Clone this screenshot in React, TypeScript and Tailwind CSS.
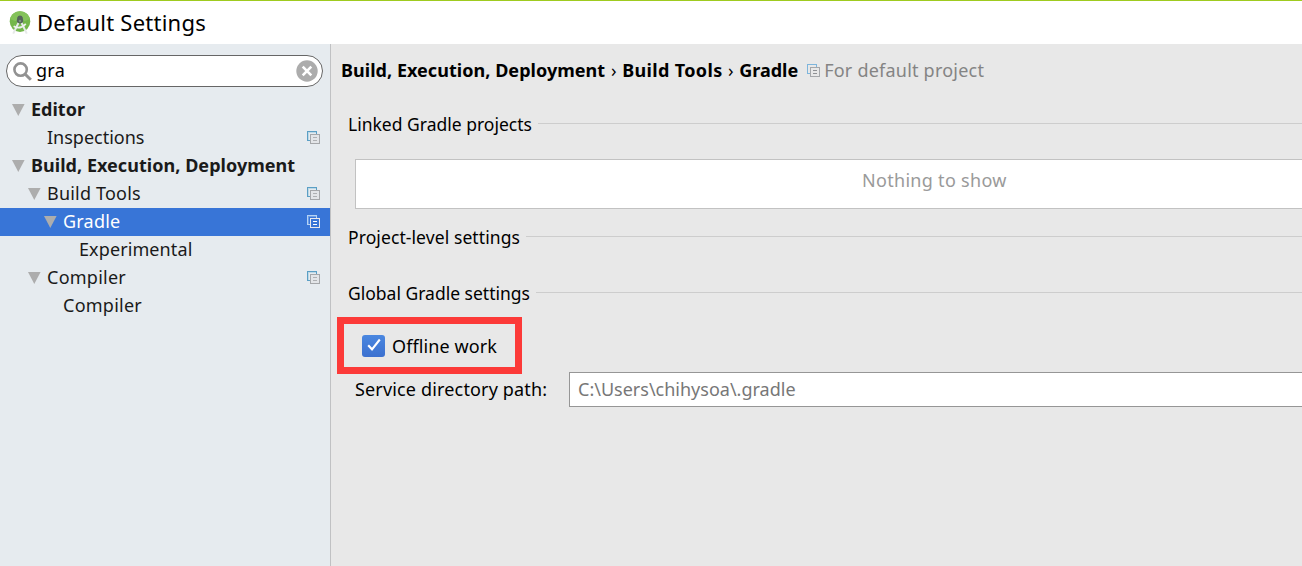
import type { ReactNode } from "react";

function CopyIcon({ selected = false, plain = false }: { selected?: boolean; plain?: boolean }) {
  const back = selected ? "#b4d2f4" : plain ? "#7db5dc" : "#5b9fc5";
  const front = selected ? "#e8e8ec" : "#a5a7aa";
  const fill = selected ? "#3875d7" : plain ? "#e8e8e8" : "#e3e5e8";
  return (
    <svg width="13" height="13" viewBox="0 0 13 13" shapeRendering="crispEdges" className="shrink-0">
      <path d="M0 0H10V3H9V1H1V9H3V10H0Z" fill={back} />
      {!plain && <path d="M1 1H9V2H2V9H1Z" fill={selected ? "#6b9de6" : "#bcd8e6"} />}
      <rect x="3.5" y="3.5" width="9" height="9" fill={fill} stroke={front} />
      <path d="M6 6H10V7H6ZM6 9H10V10H6Z" fill={selected ? "#ffffff" : plain ? "#8f9194" : "#aeb0b3"} />
    </svg>
  );
}

function LogoIcon() {
  return (
    <svg width="22" height="24" viewBox="0 0 22 24" className="shrink-0">
      <circle cx="11" cy="10.6" r="10.3" fill="#74b74a" />
      <path d="M1 8A10.3 10.3 0 0 1 21 8Q11 13 1 8Z" fill="#84c25a" />
      <path d="M8.3 6.5Q8.8 4.6 11 4.6Q13.2 4.6 13.7 6.5L14.3 10L13 12.5H9L7.7 10Z" fill="#55655a" />
      <path d="M9.4 12L4.2 22.6M12.6 12L17.8 22.6" stroke="#e6e9e8" strokeWidth="2" fill="none" />
      <path d="M4.6 15.2Q11 19 16.8 12.8" stroke="#eef1ee" strokeWidth="1.7" fill="none" />
      <circle cx="11" cy="10" r="1.3" fill="#7c8c80" />
    </svg>
  );
}

type Row = { label: ReactNode; pad: string; arrow?: boolean; icon?: boolean; cls?: string; selected?: boolean };

const rows: Row[] = [
  { label: "Editor", pad: "pl-[12px]", arrow: true, cls: "font-bold" },
  { label: "Inspections", pad: "pl-[47px]", icon: true },
  { label: "Build, Execution, Deployment", pad: "pl-[12px]", arrow: true, cls: "font-bold tracking-[0.04px]" },
  { label: "Build Tools", pad: "pl-[28px]", arrow: true, icon: true, cls: "tracking-[0.2px]" },
  { label: "Gradle", pad: "pl-[44px]", arrow: true, icon: true, selected: true, cls: "tracking-[0.2px]" },
  { label: "Experimental", pad: "pl-[79px]", cls: "tracking-[0.1px]" },
  { label: "Compiler", pad: "pl-[28px]", arrow: true, icon: true, cls: "tracking-[0.25px]" },
  { label: "Compiler", pad: "pl-[63px]", cls: "tracking-[0.25px]" },
];

function TreeRow({ label, pad, arrow, icon, cls = "", selected }: Row) {
  return (
    <div className={`flex h-7 items-center pb-[2px] pr-[10px] ${pad} ${selected ? "bg-[#3875d7] text-white" : "text-[#1a1a1a]"}`}>
      {arrow && (
        <svg width="13" height="12" viewBox="0 0 13 12" className="mr-[6px] mt-[2px] shrink-0">
          <path d="M0 0H12.6L6.3 12Z" fill="#adadad" />
        </svg>
      )}
      <span className={`whitespace-nowrap leading-[26px] ${cls}`}>{label}</span>
      {icon && (
        <span className="ml-auto">
          <CopyIcon selected={selected} />
        </span>
      )}
    </div>
  );
}

function SectionTitle({ children, cls }: { children: string; cls: string }) {
  return (
    <div className="flex h-6 items-center pl-[17px]">
      <span className={`whitespace-nowrap pb-[2px] text-[17.5px] leading-[22px] ${cls}`}>{children}</span>
      <div className="mb-[3px] ml-[6px] h-px flex-1 bg-[#cdcdcd]" />
    </div>
  );
}

export default function App() {
  return (
    <div className="flex h-[566px] w-[1302px] flex-col overflow-hidden bg-[#e8e8e8] font-['Noto_Sans','Open_Sans',sans-serif] text-[18px] text-black">
      <header className="flex h-11 shrink-0 items-center border-t border-[#9fcb1f] bg-white pl-[9px]">
        <LogoIcon />
        <h1 className="ml-[6px] pb-[2px] text-[22px] leading-[30px] tracking-[0.25px]">Default Settings</h1>
      </header>
      <div className="flex min-h-0 flex-1">
        <aside className="w-[331px] shrink-0 border-r border-[#c0c1c3] bg-[#e6ebef] pt-[11px]">
          <div className="ml-[6px] flex h-8 w-[317px] items-center rounded-full border border-[#666] bg-white pl-[6px] pr-[4px]">
            <svg width="19" height="19" viewBox="0 0 19 19" fill="none" stroke="#929292" className="shrink-0">
              <circle cx="7.6" cy="7.6" r="6.2" strokeWidth="2.6" />
              <path d="M12 12L17.8 17.8" strokeWidth="3" />
            </svg>
            <span className="ml-[4px] pb-[2px] leading-7 tracking-[0.3px]">gra</span>
            <svg width="22" height="22" viewBox="0 0 22 22" className="ml-auto shrink-0">
              <circle cx="11" cy="11" r="10.7" fill="#acacac" />
              <path d="M6.7 6.7L15.3 15.3M15.3 6.7L6.7 15.3" stroke="#fff" strokeWidth="2.6" />
            </svg>
          </div>
          <div className="mt-[9px]">
            {rows.map((row, i) => (
              <TreeRow key={i} {...row} />
            ))}
          </div>
        </aside>
        <main className="min-w-0 flex-1 pt-[11px]">
          <div className="flex h-[30px] items-center whitespace-nowrap pl-[10px]">
            <span className="font-bold tracking-[0.04px]">Build, Execution, Deployment</span>
            <span className="w-[17px] text-center">›</span>
            <span className="w-[100px] font-bold tracking-[0.35px]">Build Tools</span>
            <span className="w-[17px] text-center">›</span>
            <span className="font-bold">Gradle</span>
            <span className="ml-[9px]">
              <CopyIcon plain />
            </span>
            <span className="ml-[4px] tracking-[0.22px] text-[#848484]">For default project</span>
          </div>
          <div className="mt-[28px]">
            <SectionTitle cls="tracking-[0px]">Linked Gradle projects</SectionTitle>
          </div>
          <div className="ml-[24px] mt-[22px] flex h-[50px] items-center border border-r-0 border-[#c2c2c2] bg-white pb-[8px] pl-[506px] tracking-[0.3px] text-[#9a9a9a]">
            Nothing to show
          </div>
          <div className="mt-[17px]">
            <SectionTitle cls="tracking-[0.09px]">Project-level settings</SectionTitle>
          </div>
          <div className="mt-8">
            <SectionTitle cls="tracking-[0px]">Global Gradle settings</SectionTitle>
          </div>
          <div className="ml-[6px] mt-[11px] flex h-[57px] w-[185px] items-center border-[7px] border-[#fc3a38] pl-[18px]">
            <span className="flex h-[22px] w-[23px] shrink-0 items-center justify-center rounded-[3px] bg-linear-to-b from-[#4a87e0] to-[#3c70cf]">
              <svg width="17" height="16" viewBox="0 0 17 16" fill="none">
                <path d="M3.2 7.2L7 11.3L14.8 1.5" stroke="#fff" strokeWidth="2.1" />
              </svg>
            </span>
            <span className="ml-[7px] whitespace-nowrap pt-px tracking-[0.1px]">Offline work</span>
          </div>
          <div className="flex h-[33px] items-center pl-[24px]">
            <span className="w-[214px] shrink-0 whitespace-nowrap pb-[2px] tracking-[0.16px]">Service directory path:</span>
            <div className="-mt-[2px] flex h-[35px] flex-1 items-center border border-r-0 border-[#969696] bg-white pl-[8px] text-[#777]">
              C:\Users\chihysoa\.gradle
            </div>
          </div>
        </main>
      </div>
    </div>
  );
}
